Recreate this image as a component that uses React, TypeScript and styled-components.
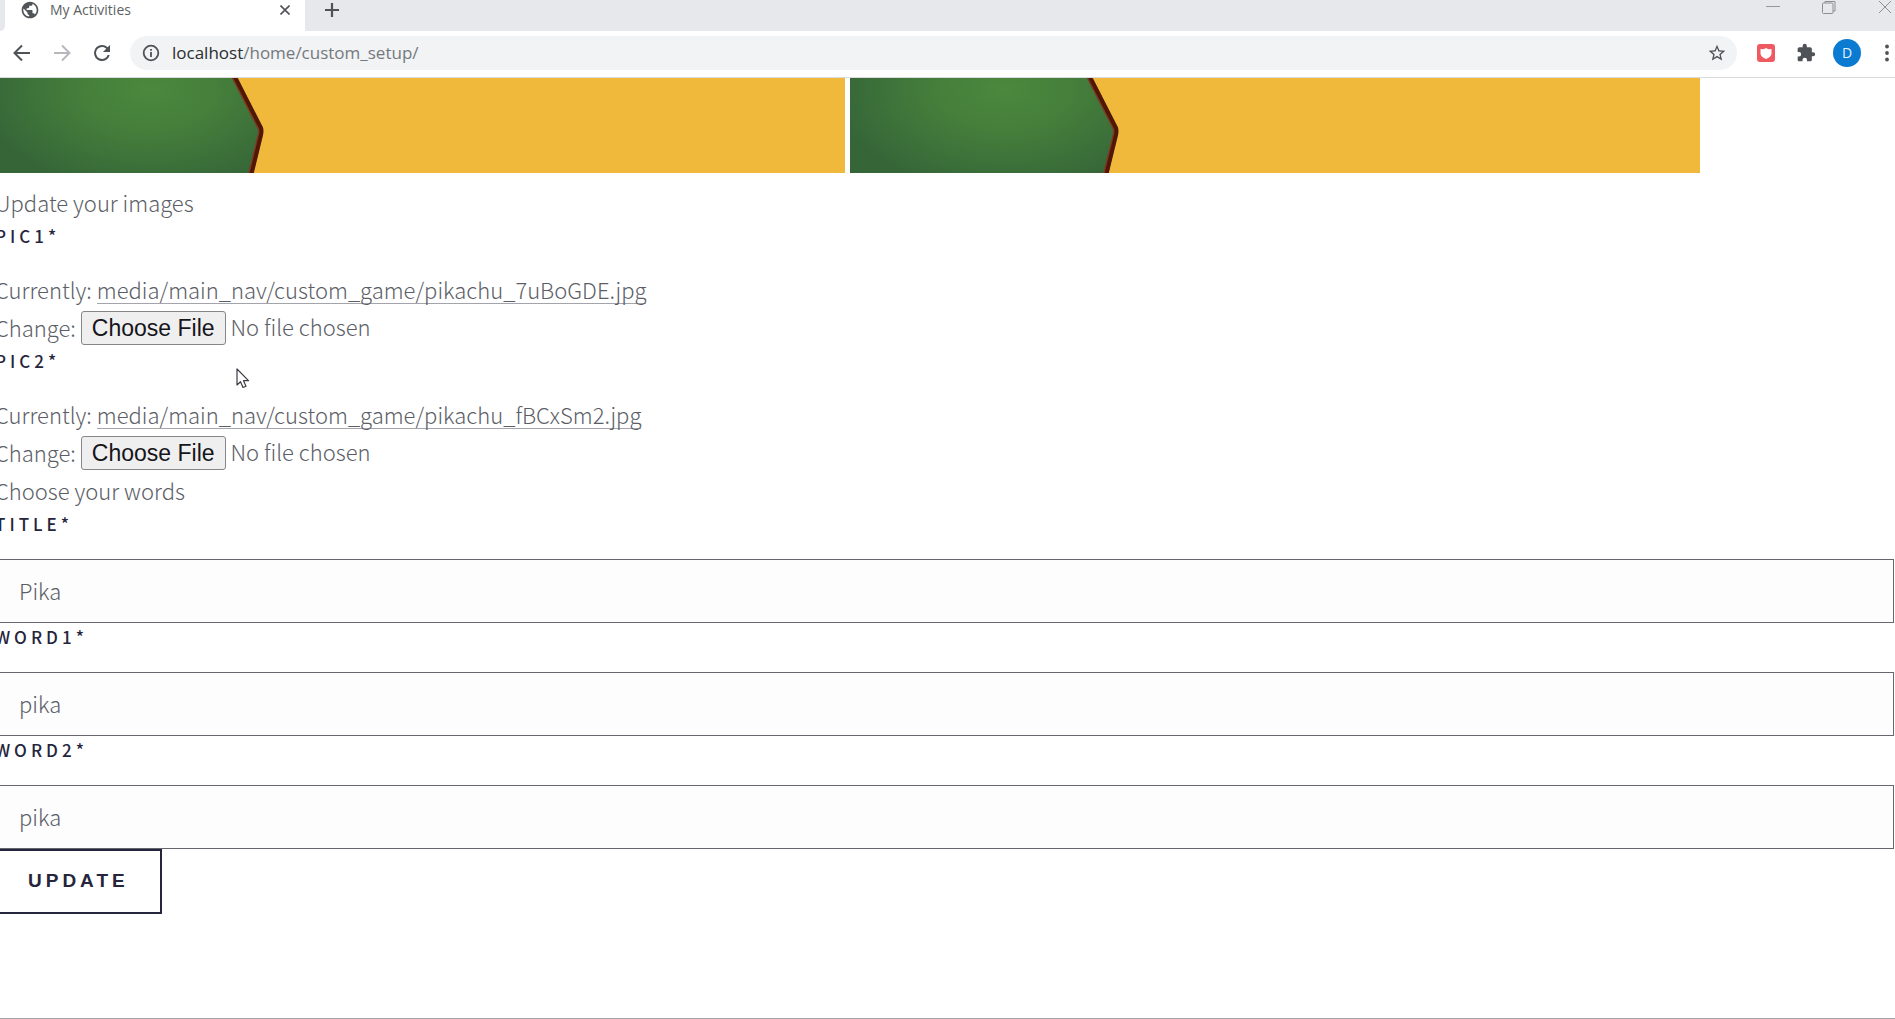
import React from 'react';
import styled, { createGlobalStyle } from 'styled-components';

const GlobalStyle = createGlobalStyle`
  *, *::before, *::after { box-sizing: border-box; }
  body { margin: 0; background: #fff; overflow: hidden; }
`;

const siteFont = '"Noto Sans CJK SC", "Noto Sans", sans-serif';
const chromeFont = '"Open Sans", "Noto Sans", sans-serif';

const Window = styled.div`
  position: relative;
  display: flex;
  flex-direction: column;
  min-height: 100vh;
  overflow: hidden;
  border-bottom: 1px solid #a4a4a6;
`;

const TabStrip = styled.header`
  display: flex;
  justify-content: space-between;
  height: 31px;
  background: #e7e8ec;
`;

const Tabs = styled.div`
  display: flex;
  background: #fff;
`;

const TabEdge = styled.div`
  width: 5px;
  background: #e7e8ec;
  border-bottom-right-radius: 5px;
`;

const Tab = styled.div`
  display: flex;
  align-items: center;
  width: 300px;
  padding: 0 10px 12px 15px;
  gap: 10px;
  background: #fff;
  font: 14px/18px ${chromeFont};
  color: #5c5f63;
`;

const TabTitle = styled.span`
  flex: 1;
`;

const StripRest = styled.div`
  display: flex;
  flex: 1;
  justify-content: space-between;
  padding: 0 0 12px 14px;
  background: #e7e8ec;
  border-bottom-left-radius: 8px;
`;

const WindowButtons = styled.div`
  display: flex;
  gap: 32px;
  margin-right: -2px;
`;

const IconButton = styled.button<{ $size?: number; $color?: string }>`
  display: flex;
  flex: none;
  align-items: center;
  justify-content: center;
  width: ${p => p.$size ?? 24}px;
  height: ${p => p.$size ?? 24}px;
  padding: 0;
  border: 0;
  background: none;
  color: ${p => p.$color ?? '#4f5256'};
`;

const WindowButton = styled(IconButton)`
  height: 14px;
`;

const Toolbar = styled.nav`
  display: flex;
  align-items: center;
  height: 47px;
  padding: 0 0 2px 10px;
  border-bottom: 1px solid #d9dadd;
  background: #fff;
`;

const NavButtons = styled.div`
  display: flex;
  gap: 16px;
  margin-right: 16px;
`;

const AddressBar = styled.div`
  display: flex;
  flex: 1;
  align-items: center;
  gap: 8px;
  height: 34px;
  padding: 0 8px;
  border-radius: 17px;
  background: #f1f3f5;
  font: 17px/24px ${chromeFont};
  color: #75797e;
`;

const Address = styled.div`
  flex: 1;
`;

const Host = styled.span`
  color: #2b2d30;
`;

const Extensions = styled.div`
  display: flex;
  align-items: center;
  gap: 14px;
  margin: 0 -4px 0 16px;
`;

const Avatar = styled.button`
  width: 28px;
  height: 28px;
  padding: 0;
  border: 0;
  border-radius: 50%;
  background: #0b7ad1;
  color: #e4f2fc;
  font: 14px/28px ${chromeFont};
`;

const Page = styled.main`
  flex: 1;
  margin-left: -5px;
  padding-right: 1px;
  font: 300 22px/38px ${siteFont};
  color: #5b5e66;
`;

const Gallery = styled.div`
  display: flex;
  gap: 5px;
  margin-bottom: 11px;
`;

const Picture = styled.svg`
  display: block;
  flex: 0 1 850px;
  min-width: 0;
  height: 95px;
`;

const Line = styled.div`
  display: flex;
  align-items: center;
  gap: 5px;
  height: 38px;
  padding-bottom: 2px;
`;

const FieldLabel = styled.label`
  display: block;
  margin-bottom: 21px;
  font: 500 17px/28px ${siteFont};
  letter-spacing: 4px;
  text-transform: uppercase;
  color: #25253c;
`;

const FileLink = styled.a`
  border-bottom: 1px solid #a3a4ac;
  line-height: 28px;
  color: inherit;
  text-decoration: none;
`;

const FileInput = styled.input`
  flex: 1;
  font: 300 22px/34px ${siteFont};
  color: inherit;

  &::file-selector-button {
    height: 34px;
    margin: 0 5px 0 0;
    padding: 0 10px;
    border: 1px solid #85858a;
    border-radius: 3px;
    background: #efeff0;
    color: #15151a;
    font: 23px/30px "Liberation Sans", Arial, sans-serif;
  }
`;

const TextInput = styled.input`
  display: block;
  width: 100%;
  height: 64px;
  padding: 0 23px 2px;
  border: 1px solid #66666e;
  background: #fdfdfe;
  font: 300 22px/38px ${siteFont};
  color: #5b5e66;
`;

const SubmitButton = styled.button`
  display: block;
  height: 65px;
  padding: 0 31px 2px;
  border: 2px solid #25253c;
  background: #fff;
  color: #25253c;
  font: 700 19px/28px "Liberation Sans", Arial, sans-serif;
  letter-spacing: 4px;
  text-transform: uppercase;
`;

const Pointer = styled.svg`
  position: absolute;
  left: 236px;
  top: 368px;
`;

function GamePicture({ id }: { id: string }) {
  return (
    <Picture viewBox="0 0 850 95" preserveAspectRatio="xMinYMin slice" role="img" aria-label="Pikachu">
      <defs>
        <radialGradient id={id} cx="155" cy="12" r="170" gradientUnits="userSpaceOnUse" gradientTransform="matrix(1 0 0 .6 0 4)">
          <stop offset="0" stopColor="#4c883d" />
          <stop offset=".4" stopColor="#457f3b" />
          <stop offset="1" stopColor="#366638" />
        </radialGradient>
      </defs>
      <path fill="#f0b93c" d="M0 0h850v95H0z" />
      <path fill={`url(#${id})`} d="M0 0h240l25 53-10 42H0z" />
      <path fill="none" stroke="#7d3a24" strokeWidth="5" strokeLinejoin="round" d="M238-3l27 53q1 3 0 7l-10 41" />
      <path fill="none" stroke="#501704" strokeWidth="4" strokeLinejoin="round" d="M239-3l27 53q1 3 0 7l-10 41" />
    </Picture>
  );
}

function FileField({ id, label, file }: { id: string; label: string; file: string }) {
  return (
    <>
      <FieldLabel htmlFor={id}>{label}*</FieldLabel>
      <Line>
        Currently: <FileLink href={`/${file}`}>{file}</FileLink>
      </Line>
      <Line>
        Change: <FileInput id={id} type="file" />
      </Line>
    </>
  );
}

function TextField({ id, label, value }: { id: string; label: string; value: string }) {
  return (
    <>
      <FieldLabel htmlFor={id}>{label}*</FieldLabel>
      <TextInput id={id} type="text" defaultValue={value} />
    </>
  );
}

export default function App() {
  return (
    <Window>
      <GlobalStyle />
      <TabStrip>
        <Tabs>
          <TabEdge />
          <Tab>
            <svg width="20" height="20" viewBox="0 0 24 24">
              <path fill="#505357" d="M12 2C6.480 2 2 6.480 2 12s4.480 10 10 10 10-4.480 10-10S17.520 2 12 2zm-1 17.930c-3.950-.49-7-3.850-7-7.930 0-.62.080-1.210.21-1.790L9 15v1c0 1.100.9 2 2 2v1.930zm6.900-2.540c-.26-.81-1-1.390-1.900-1.390h-1v-3c0-.55-.45-1-1-1H8v-2h2c.55 0 1-.45 1-1V7h2c1.100 0 2-.9 2-2v-.41c2.930 1.190 5 4.060 5 7.410 0 2.080-.8 3.970-2.100 5.390z" />
            </svg>
            <TabTitle>My Activities</TabTitle>
            <IconButton $size={20} aria-label="Close tab">
              <svg width="10" height="10" viewBox="0 0 10 10" stroke="currentColor" strokeWidth="1.6">
                <path d="M.5.5l9 9M9.500.5l-9 9" />
              </svg>
            </IconButton>
          </Tab>
        </Tabs>
        <StripRest>
          <IconButton $size={26} aria-label="New tab">
            <svg width="16" height="20" viewBox="0 0 16 20" stroke="currentColor" strokeWidth="2.200">
              <path d="M8 0v14M1 7h14" />
            </svg>
          </IconButton>
          <WindowButtons>
            <WindowButton aria-label="Minimize" $color="#96989c">
              <svg width="14" height="14" viewBox="0 0 14 14" stroke="currentColor"><path d="M0 6.500h14" /></svg>
            </WindowButton>
            <WindowButton aria-label="Restore" $color="#8d8f93">
              <svg width="14" height="14" viewBox="0 0 14 14" stroke="currentColor" fill="none">
                <rect x=".5" y="3" width="10.500" height="10.500" rx="1" />
                <path d="M3 3V1.500h10V11h-2" />
              </svg>
            </WindowButton>
            <WindowButton aria-label="Close" $color="#8d8f93">
              <svg width="14" height="14" viewBox="0 0 14 14" stroke="currentColor"><path d="M1 1l12 12M13 1L1 13" /></svg>
            </WindowButton>
          </WindowButtons>
        </StripRest>
      </TabStrip>
      <Toolbar>
        <NavButtons>
          <IconButton aria-label="Back">
            <svg width="24" height="24" viewBox="0 0 24 24" fill="none" stroke="currentColor" strokeWidth="2">
              <path d="M20 12H5M12 4.500L4.500 12l7.500 7.500" />
            </svg>
          </IconButton>
          <IconButton aria-label="Forward" $color="#b6b8bb">
            <svg width="24" height="24" viewBox="0 0 24 24" fill="none" stroke="currentColor" strokeWidth="2">
              <path d="M4 12h15M12 4.500l7.500 7.500-7.500 7.500" />
            </svg>
          </IconButton>
          <IconButton aria-label="Reload">
            <svg width="24" height="24" viewBox="0 0 24 24">
              <path fill="currentColor" d="M17.650 6.350A7.960 7.960 0 0 0 12 4a8 8 0 1 0 7.730 10h-2.080A6 6 0 1 1 12 6c1.660 0 3.140.69 4.220 1.780L13 11h7V4z" />
            </svg>
          </IconButton>
        </NavButtons>
        <AddressBar>
          <IconButton $size={26} aria-label="View site information">
            <svg width="18" height="18" viewBox="0 0 18 18" fill="none" stroke="currentColor" strokeWidth="1.800">
              <circle cx="9" cy="9" r="7.300" />
              <path d="M9 8v5M9 5v1.800" />
            </svg>
          </IconButton>
          <Address><Host>localhost</Host>/home/custom_setup/</Address>
          <IconButton aria-label="Bookmark this page">
            <svg width="20" height="20" viewBox="0 0 24 24">
              <path fill="currentColor" d="M22 9.240l-7.190-.62L12 2 9.190 8.630 2 9.240l5.460 4.730L5.820 21 12 17.270 18.180 21l-1.630-7.030L22 9.240zM12 15.400l-3.760 2.270 1-4.280-3.320-2.880 4.380-.38L12 6.100l1.710 4.040 4.380.38-3.320 2.880 1 4.280L12 15.400z" />
            </svg>
          </IconButton>
        </AddressBar>
        <Extensions>
          <IconButton $size={26} aria-label="Shield extension">
            <svg width="18" height="18" viewBox="0 0 18 18">
              <rect width="18" height="18" rx="3" fill="#ef5962" />
              <path fill="#fff" d="M3.500 5l3 .2L9 4l2.500 1.200 3-.2v4.500C14.500 12 12 14 9 15c-3-1-5.500-3-5.500-5.500z" />
            </svg>
          </IconButton>
          <IconButton $size={26} aria-label="Extensions">
            <svg width="20" height="20" viewBox="0 0 24 24">
              <path fill="currentColor" d="M20.500 11H19V7c0-1.100-.9-2-2-2h-4V3.500a2.500 2.500 0 0 0-5 0V5H4c-1.100 0-2 .9-2 2v3.800h1.500a2.700 2.700 0 0 1 0 5.400H2V20c0 1.100.9 2 2 2h3.800v-1.500a2.700 2.700 0 0 1 5.400 0V22H17c1.100 0 2-.9 2-2v-4h1.500a2.500 2.500 0 0 0 0-5z" />
            </svg>
          </IconButton>
          <Avatar aria-label="Profile">D</Avatar>
          <IconButton aria-label="Menu">
            <svg width="4" height="18" viewBox="0 0 4 18" fill="currentColor">
              <circle cx="2" cy="2.500" r="1.900" /><circle cx="2" cy="9" r="1.900" /><circle cx="2" cy="15.500" r="1.900" />
            </svg>
          </IconButton>
        </Extensions>
      </Toolbar>
      <Page>
        <Gallery>
          <GamePicture id="leafOne" />
          <GamePicture id="leafTwo" />
        </Gallery>
        <form onSubmit={e => e.preventDefault()}>
          <Line>Update your images</Line>
          <FileField id="pic1" label="Pic1" file="media/main_nav/custom_game/pikachu_7uBoGDE.jpg" />
          <FileField id="pic2" label="Pic2" file="media/main_nav/custom_game/pikachu_fBCxSm2.jpg" />
          <Line>Choose your words</Line>
          <TextField id="title" label="Title" value="Pika" />
          <TextField id="word1" label="Word1" value="pika" />
          <TextField id="word2" label="Word2" value="pika" />
          <SubmitButton type="submit">Update</SubmitButton>
        </form>
      </Page>
      <Pointer width="14" height="22" viewBox="0 0 14 22" aria-hidden="true">
        <path fill="#fff" stroke="#3c3c44" strokeWidth="1.200" strokeLinejoin="round" d="M1 1v16l3.500-3.300L7 19.500l3-1.300-2.500-5.500h5z" />
      </Pointer>
    </Window>
  );
}
